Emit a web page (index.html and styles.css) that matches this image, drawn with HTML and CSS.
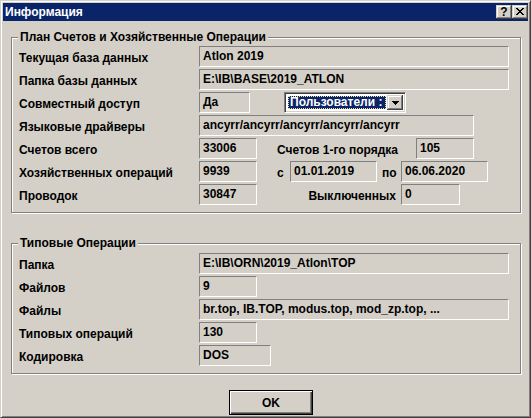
FILE: index.html
```html
<!DOCTYPE html>
<html lang="ru">
<head>
<meta charset="utf-8">
<title>Информация</title>
<link rel="stylesheet" href="styles.css">
</head>
<body>
<div class="window">
  <div class="titlebar">
    <span class="title">Информация</span>
    <div class="tbtns">
      <span class="tbtn help">?</span>
      <span class="tbtn close">
        <svg width="8" height="7" viewBox="0 0 8 7" shape-rendering="crispEdges"><path fill="#000" d="M0 0h2v1h-2zM6 0h2v1h-2zM1 1h2v1h-2zM5 1h2v1h-2zM2 2h4v1h-4zM3 3h2v1h-2zM2 4h4v1h-4zM1 5h2v1h-2zM5 5h2v1h-2zM0 6h2v1h-2zM6 6h2v1h-2z"/></svg>
      </span>
    </div>
  </div>

  <fieldset class="group g1">
    <legend>План Счетов и Хозяйственные Операции</legend>
    <div class="row"><span class="lbl">Текущая база данных</span><span class="fld w-full">Atlon 2019</span></div>
    <div class="row"><span class="lbl">Папка базы данных</span><span class="fld w-full">E:\IB\BASE\2019_ATLON</span></div>
    <div class="row">
      <span class="lbl">Совместный доступ</span><span class="fld w-da">Да</span>
      <div class="combo">
        <span class="combo-sel"><span class="focus">Пользователи :</span></span>
        <span class="combo-btn"><svg width="7" height="4" viewBox="0 0 7 4" shape-rendering="crispEdges"><path fill="#000" d="M0 0h7v1h-7zM1 1h5v1h-5zM2 2h3v1h-3zM3 3h1v1h-1z"/></svg></span>
      </div>
    </div>
    <div class="row"><span class="lbl">Языковые драйверы</span><span class="fld w-mid">ancyrr/ancyrr/ancyrr/ancyrr/ancyrr</span></div>
    <div class="row">
      <span class="lbl">Счетов всего</span><span class="fld w-short">33006</span>
      <span class="lbl2 l-order">Счетов 1-го порядка</span><span class="fld w-short">105</span>
    </div>
    <div class="row">
      <span class="lbl">Хозяйственных операций</span><span class="fld w-short">9939</span>
      <span class="lbl2 l-from">с</span><span class="fld w-date">01.01.2019</span>
      <span class="lbl2 l-to">по</span><span class="fld w-date">06.06.2020</span>
    </div>
    <div class="row">
      <span class="lbl">Проводок</span><span class="fld w-short">30847</span>
      <span class="lbl2 l-off">Выключенных</span><span class="fld w-zero">0</span>
    </div>
  </fieldset>

  <fieldset class="group g2">
    <legend>Типовые Операции</legend>
    <div class="row"><span class="lbl">Папка</span><span class="fld w-full">E:\IB\ORN\2019_Atlon\TOP</span></div>
    <div class="row"><span class="lbl">Файлов</span><span class="fld w-short">9</span></div>
    <div class="row"><span class="lbl">Файлы</span><span class="fld w-full">br.top, IB.TOP, modus.top, mod_zp.top, ...</span></div>
    <div class="row"><span class="lbl">Типовых операций</span><span class="fld w-short">130</span></div>
    <div class="row"><span class="lbl">Кодировка</span><span class="fld w-enc">DOS</span></div>
  </fieldset>

  <div class="actions"><button class="ok" type="button">OK</button></div>
</div>
</body>
</html>
```
FILE: styles.css
```css
html, body {
  margin: 0;
  padding: 0;
  background: #d4d0c8;
}

.window {
  width: 531px;
  height: 418px;
  box-sizing: border-box;
  border: 1px solid;
  border-color: #d4d0c8 #404040 #404040 #d4d0c8;
  box-shadow: inset 1px 1px 0 #fff, inset -1px -1px 0 #808080;
  padding: 2px;
  background: #d4d0c8;
  font: bold 12px "Liberation Sans", Arial, sans-serif;
  color: #000;
  display: flex;
  flex-direction: column;
  overflow: hidden;
}

/* title bar */
.titlebar {
  height: 18px;
  flex: none;
  background: #0a246a;
  color: #fff;
  display: flex;
  justify-content: space-between;
  align-items: flex-start;
}
.title {
  padding: 1px 0 0 2px;
  line-height: 17px;
}
.tbtns {
  display: flex;
  margin-top: 2px;
}
.tbtn {
  width: 16px;
  height: 14px;
  box-sizing: border-box;
  background: #d4d0c8;
  box-shadow: inset -1px -1px 0 #404040, inset 1px 1px 0 #d4d0c8,
              inset -2px -2px 0 #808080, inset 2px 2px 0 #fff;
  display: flex;
  align-items: center;
  justify-content: center;
  color: #000;
}
.help {
  font-size: 12px;
  line-height: 14px;
  padding-bottom: 1px;
}
.close svg { display: block; margin-top: -1px; }

/* group boxes */
.group {
  flex: none;
  margin: 0 7px 0 8px;
  padding: 1px 7px 7px 7px;
  border: 1px solid #808080;
  box-shadow: 1px 1px 0 #fff, inset 1px 1px 0 #fff;
  min-width: 0;
}
.g1 { margin-top: 9px; }
.g2 { margin-top: 23px; padding-top: 2px; }

.group legend {
  padding: 0 2px;
  margin-left: -1px;
  line-height: 15px;
  background: #d4d0c8;
}

.row {
  display: flex;
  height: 21px;
}
.row + .row { margin-top: 2px; }

.lbl {
  flex: none;
  width: 180px;
  padding-top: 4px;
  line-height: 17px;
  white-space: nowrap;
}
.lbl2 {
  flex: none;
  box-sizing: border-box;
  padding-top: 4px;
  line-height: 17px;
  white-space: nowrap;
}
.l-order { margin-left: 20px; width: 139px; }
.l-from { margin-left: 20px; width: 13px; }
.l-to { margin-left: 5px; width: 19px; }
.l-off { width: 144px; text-align: right; padding-right: 5px; }

.fld {
  flex: none;
  box-sizing: border-box;
  height: 21px;
  border: 1px solid;
  border-color: #808080 #fff #fff #808080;
  padding: 0 0 1px 3px;
  line-height: 18px;
  white-space: nowrap;
  overflow: hidden;
}
.w-full { width: 310px; }
.w-mid { width: 275px; }
.w-short { width: 58px; }
.w-da { width: 51px; }
.w-date { width: 87px; }
.w-zero { width: 59px; }
.w-enc { width: 72px; }

/* combo box */
.combo {
  flex: none;
  margin-left: 34px;
  width: 122px;
  height: 21px;
  box-sizing: border-box;
  border: 1px solid;
  border-color: #808080 #fff #fff #808080;
  box-shadow: inset 1px 1px 0 #404040, inset -1px -1px 0 #d4d0c8;
  padding: 2px;
  background: #fff;
  display: flex;
}
.combo-sel {
  flex: 1;
  margin: 1px 1px 1px 1px;
  background: #0a246a;
  color: #fff;
  display: flex;
}
.focus {
  flex: 1;
  border: 1px dotted #f5db95;
  padding-left: 1px;
  line-height: 11px;
  white-space: nowrap;
}
.combo-btn {
  flex: none;
  width: 16px;
  box-sizing: border-box;
  background: #d4d0c8;
  box-shadow: inset -1px -1px 0 #404040, inset 1px 1px 0 #d4d0c8,
              inset -2px -2px 0 #808080, inset 2px 2px 0 #fff;
  display: flex;
  align-items: center;
  justify-content: center;
}
.combo-btn svg { display: block; }

/* button row */
.actions {
  flex: none;
  display: flex;
  margin-top: 16px;
  padding-left: 226px;
}
.ok {
  width: 84px;
  height: 25px;
  box-sizing: border-box;
  border: 1px solid #000;
  background: #d4d0c8;
  box-shadow: inset 1px 1px 0 #fff, inset -1px -1px 0 #404040, inset -2px -2px 0 #808080;
  font: bold 12px "Liberation Sans", Arial, sans-serif;
  color: #000;
  padding: 0;
  margin: 0;
}
```
